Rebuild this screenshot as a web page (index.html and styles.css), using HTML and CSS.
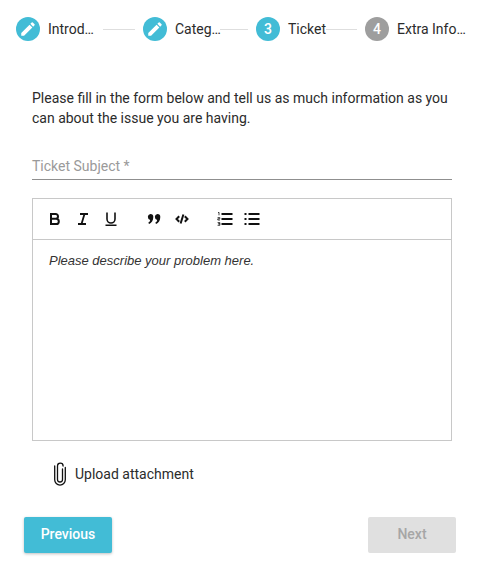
FILE: index.html
```html
<!DOCTYPE html>
<html lang="en">
<head>
<meta charset="utf-8">
<title>Ticket</title>
<link rel="stylesheet" href="styles.css">
</head>
<body>
<div class="page">
  <nav class="stepper">
    <div class="step s1">
      <span class="dot"><svg viewBox="0 0 24 24" width="18" height="18"><path fill="#fff" d="M3 17.250V21h3.750L17.810 9.940l-3.750-3.750L3 17.250zM20.710 7.040a1 1 0 0 0 0-1.410l-2.340-2.340a1 1 0 0 0-1.410 0l-1.830 1.830 3.750 3.750 1.830-1.830z"/></svg></span>
      <span class="label">Introd…</span>
    </div>
    <span class="line l1"></span>
    <div class="step s2">
      <span class="dot"><svg viewBox="0 0 24 24" width="18" height="18"><path fill="#fff" d="M3 17.250V21h3.750L17.810 9.940l-3.750-3.750L3 17.250zM20.710 7.040a1 1 0 0 0 0-1.410l-2.340-2.340a1 1 0 0 0-1.410 0l-1.830 1.830 3.750 3.750 1.830-1.830z"/></svg></span>
      <span class="label">Categ…</span>
    </div>
    <span class="line l2"></span>
    <div class="step s3">
      <span class="dot">3</span>
      <span class="label">Ticket</span>
    </div>
    <span class="line l3"></span>
    <div class="step s4">
      <span class="dot grey">4</span>
      <span class="label">Extra Info…</span>
    </div>
  </nav>

  <main class="form">
    <p class="intro">Please fill in the form below and tell us as much information as you can about the issue you are having.</p>
    <div class="field">Ticket Subject *</div>
    <section class="editor">
      <div class="toolbar">
        <svg class="ic b" viewBox="0 0 14 14" width="14" height="14"><path fill="none" stroke="#111" stroke-width="2" d="M3 2h4.600a2.400 2.400 0 0 1 0 4.800H3zM3 6.800h5.200a2.600 2.600 0 0 1 0 5.200H3z"/></svg>
        <svg class="ic i" viewBox="0 0 14 14" width="14" height="14"><path fill="none" stroke="#111" stroke-width="1.800" d="M4 2h8M2 12h8M8.500 2l-3 10"/></svg>
        <svg class="ic u" viewBox="0 0 14 14" width="14" height="14"><path fill="none" stroke="#111" stroke-width="1.600" d="M3 0.500v6.500a4 4 0 0 0 8 0V0.500M1.500 13.300h11"/></svg>
        <svg class="ic q" viewBox="0 0 14 14" width="14" height="14"><path fill="#111" d="M3.400 2a2.900 2.900 0 0 1 2.900 3c0 3.400-1.800 6-4.200 7l-.9-1.200c1.100-.7 1.800-1.700 2-2.900A3 3 0 0 1 3.400 2zM10.400 2a2.900 2.900 0 0 1 2.900 3c0 3.400-1.800 6-4.200 7l-.9-1.200c1.100-.7 1.800-1.700 2-2.900a3 3 0 0 1 .2-5.900z"/></svg>
        <svg class="ic c" viewBox="0 0 14 14" width="14" height="14"><path fill="none" stroke="#111" stroke-width="2" d="M4.200 4.200L1.500 7l2.700 2.800M9.800 4.200L12.500 7l-2.700 2.800M8.400 2.500L5.600 11.500"/></svg>
        <svg class="ic ol" viewBox="0 0 16 14" width="16" height="14"><path fill="none" stroke="#111" stroke-width="2" d="M4.500 2h11M4.500 7h11M4.500 12h11"/><path fill="none" stroke="#111" stroke-width=".8" d="M1 .6l1-.3v3M.6 5.600h2.200v1.200H.8v1.200h2.200M.6 10.600h2.300v1.200H1.400h1.500v1.500H.6"/></svg>
        <svg class="ic ul" viewBox="0 0 16 14" width="16" height="14"><path fill="none" stroke="#111" stroke-width="2" d="M4.500 2h11M4.500 7h11M4.500 12h11M.5 2h2M.5 7h2M.5 12h2"/></svg>
      </div>
      <div class="body">Please describe your problem here.</div>
    </section>
    <div class="upload">
      <svg class="clip" viewBox="0 0 12 24" width="12" height="24"><path fill="none" stroke="#111" stroke-width="1.300" stroke-linecap="round" d="M8.500 7v10.500a2.500 2.500 0 0 1-5 0V4a2.800 2.800 0 0 1 5.600 0"/><path fill="none" stroke="#111" stroke-width="1.300" stroke-linecap="round" d="M11.300 5.500v12.300a5.300 5.300 0 0 1-10.600 0V4"/></svg>
      <span>Upload attachment</span>
    </div>
  </main>

  <footer class="actions">
    <button class="btn prev">Previous</button>
    <button class="btn next">Next</button>
  </footer>
</div>
</body>
</html>
```
FILE: styles.css
```css
* { box-sizing: border-box; }
html, body { margin: 0; padding: 0; background: #fff; }
body { font-family: Roboto, sans-serif; color: #212121; width: 481px; height: 574px; overflow: hidden; }
.page { display: flex; flex-direction: column; height: 100%; }

.stepper { display: flex; align-items: center; height: 24px; margin-top: 17px; padding-left: 16px; }
.step { display: flex; align-items: center; gap: 8px; flex: none; font-size: 14px; }
.dot { width: 24px; height: 24px; border-radius: 50%; background: #42bcd6; color: #fff; font-size: 14px; font-weight: 500; display: flex; align-items: center; justify-content: center; flex: none; }
.dot.grey { background: #9e9e9e; }
.label { white-space: nowrap; color: #2b2b2b; }
.line { height: 1px; background: #dedede; flex: none; }
.s1 { width: 79px; }
.l1 { width: 32px; margin: 1px 8px 0; }
.s2 { width: 78px; }
.l2 { width: 28px; margin: 1px 8px 0 -1px; }
.s3 { width: 70px; }
.l3 { width: 31px; margin: 1px 8px 0 0; }

.form { padding: 0 29px 0 32px; margin-top: 47px; }
.intro { margin: 0; font-size: 14px; line-height: 20px; color: #2b2b2b; width: 420px; }
.field { margin-top: 28px; height: 24px; border-bottom: 1px solid #8f8f8f; font-size: 14px; line-height: 17px; color: #9a9a9a; padding-top: 2px; }

.editor { margin-top: 18px; height: 243px; border: 1px solid #c8c8c8; }
.toolbar { height: 41px; border-bottom: 1px solid #c8c8c8; display: flex; align-items: center; padding-left: 15px; }
.ic { flex: none; }
.i { margin-left: 14px; }
.u { margin-left: 14px; }
.q { margin-left: 29px; }
.c { margin-left: 14px; }
.ol { margin-left: 28px; }
.ul { margin-left: 11px; }
.body { padding: 13px 16px; font: italic 13px/16px "Liberation Sans", Arial, sans-serif; color: #333; }

.upload { display: flex; align-items: center; gap: 9px; margin: 21px 0 0 22px; height: 24px; font-size: 14px; color: #2b2b2b; }

.actions { display: flex; justify-content: space-between; padding: 0 25px 0 24px; margin-top: 31px; }
.btn { width: 88px; height: 36px; padding: 0 0 2px; border: 0; border-radius: 2px; font: 500 14px Roboto, sans-serif; }
.prev { background: #42bcd6; color: #fff; box-shadow: 0 1px 3px rgba(0,0,0,.25); }
.next { background: #e0e0e0; color: #a6a6a6; }
```
